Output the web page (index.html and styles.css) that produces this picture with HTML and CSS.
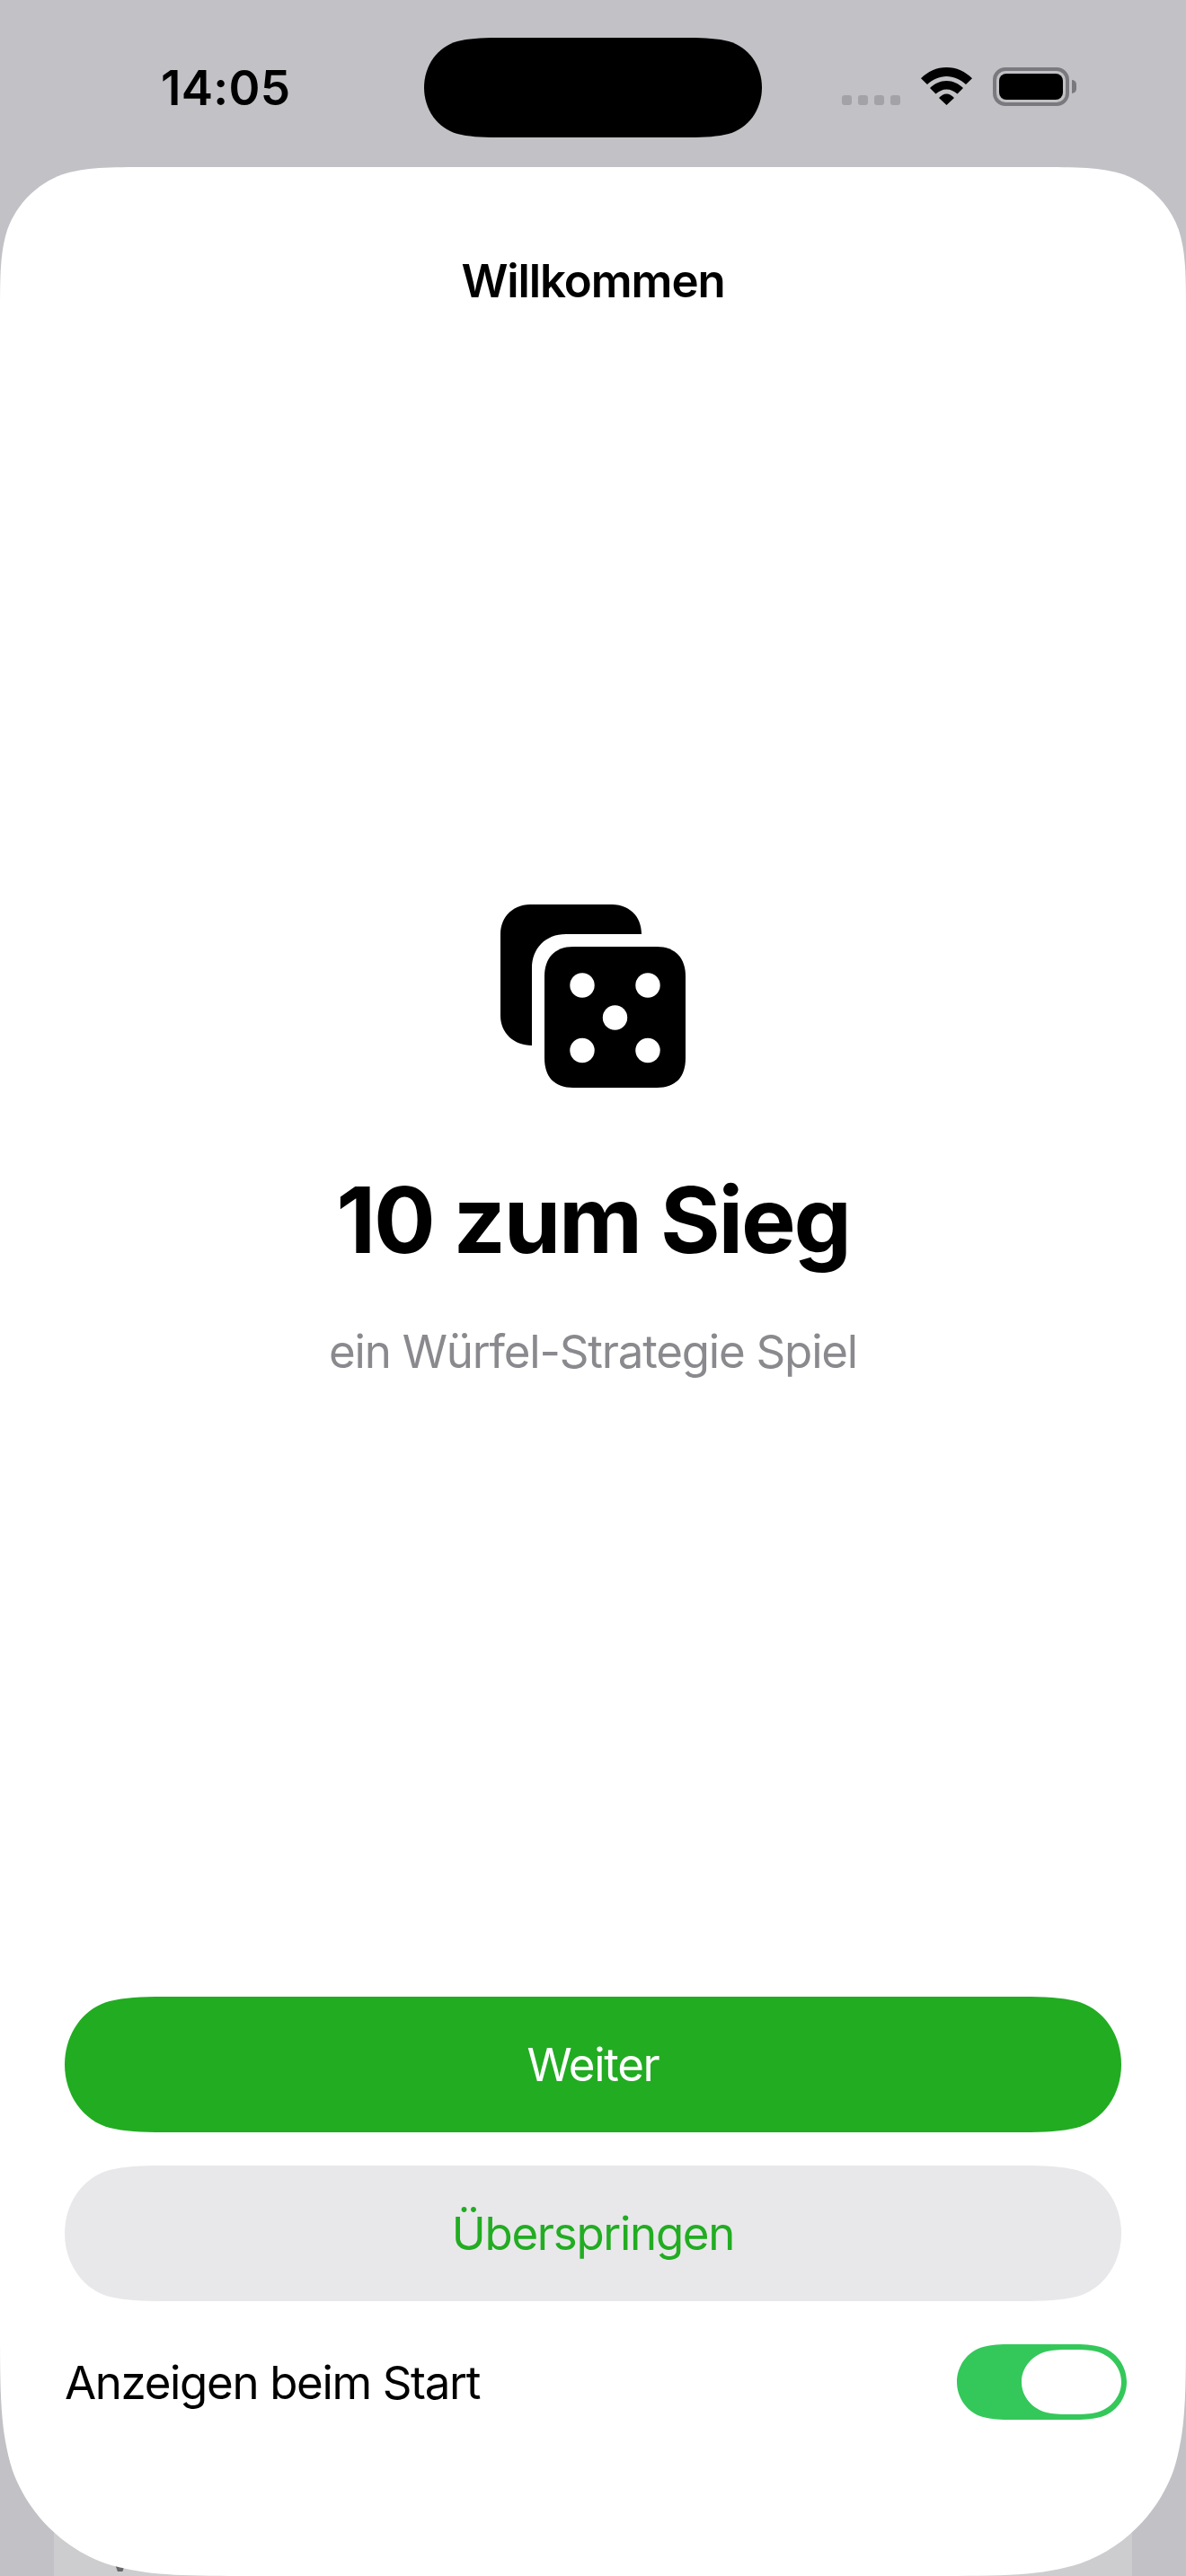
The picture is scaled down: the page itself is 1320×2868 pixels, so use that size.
FILE: index.html
```html
<!DOCTYPE html>
<html lang="de">
<head>
<meta charset="utf-8">
<title>10 zum Sieg</title>
<link rel="stylesheet" href="styles.css">
</head>
<body>
<div class="screen">
  <div class="peek"><span class="peek-text">Vo</span></div>
  <header class="status">
    <span class="time">14:05</span>
    <div class="island"></div>
    <div class="indicators">
      <div class="dots"><i class="dot"></i><i class="dot"></i><i class="dot"></i><i class="dot"></i></div>
      <svg class="wifi" width="57" height="42" viewBox="0 0 57 42" aria-hidden="true">
        <path d="M0,12.3 C7.5,4.6 17.5,0 28.5,0 C39.5,0 49.5,4.6 57,12.3 L50,19 C44,13.5 36.5,10 28.5,10 C20.5,10 13,13.5 7,19 Z"/>
        <path d="M10,23 C15,18 21.5,15 28.5,15 C35.5,15 42,18 47,23 L40.5,29.5 C37,26.5 33,24.5 28.5,24.5 C24,24.5 20,26.5 16.5,29.5 Z"/>
        <path d="M20,34 C22.5,31.5 25.5,29.5 28.5,29.5 C31.5,29.5 34.5,31.5 37,34 L28.5,42 Z"/>
      </svg>
      <div class="battery"><div class="battery-body"><div class="battery-fill"></div></div><div class="battery-nub"></div></div>
    </div>
  </header>
  <section class="sheet">
    <h2 class="sheet-title">Willkommen</h2>
    <main class="hero">
      <svg class="dice" width="206" height="204" viewBox="0 0 206 204" aria-hidden="true">
        <path d="M33,0 H124 C144,0 157,14 157,33 H73 C50,33 35,49 35,71 V157 C15,157 0,143 0,124 V33 C0,14 14,0 33,0 Z"/>
        <path d="M81,47 H174 C195,47 206,60 206,80 V171 C206,192 195,204 174,204 H81 C60,204 49,192 49,171 V80 C49,60 60,47 81,47 Z"/>
        <circle class="pip" cx="91" cy="90" r="13.7"/>
        <circle class="pip" cx="164" cy="90" r="13.7"/>
        <circle class="pip" cx="127.5" cy="126" r="13.7"/>
        <circle class="pip" cx="91" cy="162.5" r="13.7"/>
        <circle class="pip" cx="164" cy="162.5" r="13.7"/>
      </svg>
      <h1 class="title">10 zum Sieg</h1>
      <p class="subtitle">ein Würfel-Strategie Spiel</p>
    </main>
    <div class="actions">
      <button class="btn btn-primary" type="button">Weiter</button>
      <button class="btn btn-secondary" type="button">Überspringen</button>
      <div class="toggle-row">
        <span class="toggle-label">Anzeigen beim Start</span>
        <svg class="toggle" width="189" height="84" viewBox="0 0 189 84" role="img" aria-label="An">
          <path class="toggle-track" d="M62,0 H127 C141,0 151,0.5 160,3 C177,7.5 189,24 189,42 C189,60 177,76.5 160,81 C151,83.5 141,84 127,84 H62 C48,84 38,83.5 29,81 C12,76.5 0,60 0,42 C0,24 12,7.5 29,3 C38,0.5 48,0 62,0 Z"/>
          <path class="toggle-knob" d="M124,6 H131 C141,6 149,6.5 155,8 C170,11.5 183,25 183,42 C183,59 170,72.5 155,76 C149,77.5 141,78 131,78 H124 C114,78 106,77.5 100,76 C85,72.5 72,59 72,42 C72,25 85,11.5 100,8 C106,6.5 114,6 124,6 Z"/>
        </svg>
      </div>
    </div>
  </section>
</div>
</body>
</html>
```
FILE: styles.css
```css
* { box-sizing: border-box; }
html, body { margin: 0; padding: 0; }
body { font-family: Inter, "Liberation Sans", sans-serif; color: #000; background: #c2c1c6; }

.screen {
  position: relative;
  width: 1320px;
  height: 2868px;
  overflow: hidden;
  background: #c2c1c6;
}

.peek {
  position: absolute;
  left: 60px;
  right: 60px;
  top: 2760px;
  bottom: 0;
  padding: 55px 0 0 56px;
  background: #cdcdcf;
}
.peek-text { font-size: 51px; line-height: 60px; letter-spacing: -1.3px; color: #67676a; }

.status {
  position: relative;
  display: flex;
  align-items: flex-start;
  height: 186px;
}
.time {
  width: 293px;
  margin: 67px 0 0 179px;
  font-size: 53px;
  line-height: 62px;
  letter-spacing: 0.3px;
  font-weight: 600;
}
.island {
  width: 376px;
  height: 111px;
  margin-top: 42px;
  background: #000;
  clip-path: path("M81,0 H295 C313,0 327,1 339,4 C361,10 376,31 376,55.5 C376,80 361,101 339,107 C327,110 313,111 295,111 H81 C63,111 49,110 37,107 C15,101 0,80 0,55.5 C0,31 15,10 37,4 C49,1 63,0 81,0 Z");
}
.indicators {
  display: flex;
  align-items: flex-start;
  margin: 75px 0 0 89px;
}
.dots { display: flex; gap: 7px; margin-top: 31px; }
.dot { display: block; width: 11px; height: 11px; border-radius: 3px; background: #a3a3a7; }
.wifi { display: block; margin-left: 23px; fill: #000; }
.battery { display: flex; align-items: center; margin-left: 23px; }
.battery-body {
  width: 85px;
  height: 43px;
  padding: 3px;
  border: 4px solid #7a7a7e;
  border-radius: 14px;
}
.battery-fill { width: 100%; height: 100%; background: #000; border-radius: 8px; }
.battery-nub { width: 5px; height: 15px; margin-left: 3px; background: #7a7a7e; border-radius: 0 8px 8px 0; }

.sheet {
  position: relative;
  display: flex;
  flex-direction: column;
  width: 1320px;
  height: 2682px;
  background: #fff;
  clip-path: path("M0,168.15 C0,119.73 0,95.53 8.24,69.46 C18.6,41.01 41.01,18.6 69.46,8.24 C95.53,0 119.73,0 168.15,0 H1151.85 C1200.27,0 1224.47,0 1250.54,8.24 C1278.99,18.6 1301.4,41.01 1311.76,69.46 C1320,95.53 1320,119.73 1320,168.15 V2397.67 C1320,2479.54 1320,2520.48 1306.07,2564.54 C1288.56,2612.66 1250.66,2650.56 1202.54,2668.07 C1158.48,2682 1117.54,2682 1035.67,2682 H284.33 C202.46,2682 161.52,2682 117.46,2668.07 C69.34,2650.56 31.44,2612.66 13.93,2564.54 C0,2520.48 0,2479.54 0,2397.67 Z");
}
.sheet-title {
  margin: 97px 0 0;
  font-size: 51px;
  line-height: 60px;
  letter-spacing: -1.1px;
  font-weight: 600;
  text-align: center;
}
.hero {
  flex: 1;
  display: flex;
  flex-direction: column;
  align-items: center;
  padding-top: 664px;
}
.dice { display: block; fill: #000; }
.pip { fill: #fff; }
.title {
  margin: 87px 0 0;
  font-size: 102px;
  line-height: 120px;
  letter-spacing: -2.2px;
  font-weight: 700;
}
.subtitle {
  margin: 57px 0 0;
  font-size: 51px;
  line-height: 60px;
  letter-spacing: -1.2px;
  font-weight: 400;
  color: #8a8a8e;
}

.actions {
  display: flex;
  flex-direction: column;
  padding: 0 66px 174px 72px;
}
.btn {
  display: block;
  width: 1176px;
  height: 151px;
  border: 0;
  padding: 0;
  font: 400 51px/60px Inter, "Liberation Sans", sans-serif;
  letter-spacing: -1.3px;
  clip-path: path("M110,0 H1066 C1091,0 1110,1 1126,5 C1156,13 1176,42 1176,75.5 C1176,109 1156,138 1126,146 C1110,150 1091,151 1066,151 H110 C85,151 66,150 50,146 C20,138 0,109 0,75.5 C0,42 20,13 50,5 C66,1 85,0 110,0 Z");
}
.btn-primary { background: #22ac22; color: #fff; }
.btn-secondary { margin-top: 37px; background: #e8e8ea; color: #22ac22; }
.toggle-row {
  display: flex;
  align-items: center;
  justify-content: space-between;
  margin-top: 48px;
}
.toggle-label { padding-top: 2px; font-size: 51px; line-height: 60px; letter-spacing: -1.35px; }
.toggle { display: block; }
.toggle-track { fill: #34c85a; }
.toggle-knob { fill: #fff; }
```
